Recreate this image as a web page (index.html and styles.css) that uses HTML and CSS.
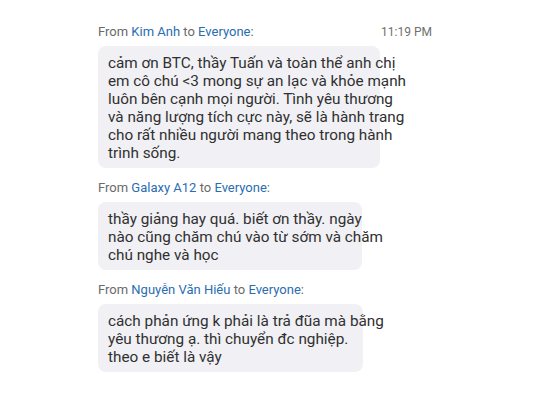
FILE: index.html
```html
<!DOCTYPE html>
<html lang="vi">
<head>
<meta charset="utf-8">
<link rel="stylesheet" href="styles.css">
</head>
<body>
<div class="chat">
  <div class="msg">
    <div class="head">
      <span class="from">From <span class="name">Kim Anh</span> to <span class="name">Everyone</span>:</span>
      <span class="time">11:19 PM</span>
    </div>
    <div class="bubble b1">cảm ơn BTC, thầy Tuấn và toàn thể anh chị<br>em cô chú &lt;3 mong sự an lạc và khỏe mạnh<br>luôn bên cạnh mọi người. Tình yêu thương<br>và năng lượng tích cực này, sẽ là hành trang<br>cho rất nhiều người mang theo trong hành<br>trình sống.</div>
  </div>
  <div class="msg">
    <div class="head">
      <span class="from">From <span class="name">Galaxy A12</span> to <span class="name">Everyone</span>:</span>
    </div>
    <div class="bubble b2">thầy giảng hay quá. biết ơn thầy. ngày<br>nào cũng chăm chú vào từ sớm và chăm<br>chú nghe và học</div>
  </div>
  <div class="msg">
    <div class="head">
      <span class="from">From <span class="name">Nguyễn Văn Hiếu</span> to <span class="name">Everyone</span>:</span>
    </div>
    <div class="bubble b3">cách phản ứng k phải là trả đũa mà bằng<br>yêu thương ạ. thì chuyển đc nghiệp.<br>theo e biết là vậy</div>
  </div>
</div>
</body>
</html>
```

FILE: styles.css
```css
html, body {
  margin: 0;
  padding: 0;
  background: #ffffff;
}
body {
  width: 533px;
  height: 400px;
  overflow: hidden;
  font-family: Roboto, "Noto Sans", sans-serif;
}
.chat {
  padding: 24px 0 0 98px;
  display: flex;
  flex-direction: column;
  gap: 12px;
}
.head {
  display: flex;
  justify-content: space-between;
  align-items: baseline;
  width: 334px;
  font-size: 13px;
  line-height: 16px;
  color: #6a6a6a;
  margin-bottom: 6px;
}
.name {
  color: #2a6db0;
}
.time {
  color: #707070;
  font-size: 12px;
}
.bubble {
  background: #f1f1f5;
  border-radius: 8px;
  padding: 8px 10px 6px 10px;
  font-size: 15.3px;
  line-height: 18px;
  color: #303030;
  box-sizing: border-box;
  white-space: nowrap;
}
.b1 { width: 282px; }
.b2 { width: 264px; }
.b3 { width: 265px; }
```
